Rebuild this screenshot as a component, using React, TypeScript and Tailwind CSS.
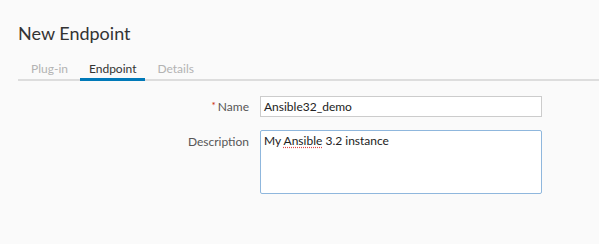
export default function App() {
  return (
    <div className="flex h-[244px] w-[606px] bg-white" style={{ fontFamily: "Lato, 'Open Sans', sans-serif" }}>
      <div className="flex-1 bg-[#fafafa] flex flex-col">
        <div className="pl-[18px] pt-[23px] text-[18px] leading-[20px] text-[#333]">New Endpoint</div>
        <div className="ml-[18px] mt-[18px] flex border-b-2 border-[#dddddd] text-[12px] leading-[15px]">
          <div className="px-[13px] pb-[3px] text-[#b3b3b3]">Plug-in</div>
          <div className="ml-[-1px] mb-[-2px] border-b-[3px] border-[#0079b8] px-[9px] pb-[2px] text-[#333]">Endpoint</div>
          <div className="px-[12px] pb-[3px] text-[#b3b3b3]">Details</div>
        </div>
        <div className="mt-[15px] flex flex-col gap-[13px] text-[12px]">
          <div className="flex items-center">
            <div className="w-[249px] text-right text-[#565656]">
              <span className="text-[#c92100] mr-[2px] align-[2px] text-[10px]">*</span>Name
            </div>
            <div className="ml-[11px] flex h-[21px] w-[282px] items-center border border-[#cccccc] bg-white px-[3px] text-[12px] text-[#222]">
              Ansible32_demo
            </div>
          </div>
          <div className="flex items-start">
            <div className="w-[249px] pt-[3px] text-right text-[#565656]">Description</div>
            <div className="ml-[11px] h-[64px] w-[282px] rounded-[2px] border border-[#8fb7dd] bg-white px-[3px] pt-[1px] text-[12px] text-[#222]">
              My{" "}
              <span className="underline decoration-dotted decoration-[#e04a4a] underline-offset-2">Ansible</span>{" "}
              3.2 instance
            </div>
          </div>
        </div>
      </div>
      <div className="w-[7px] bg-white" />
    </div>
  );
}
